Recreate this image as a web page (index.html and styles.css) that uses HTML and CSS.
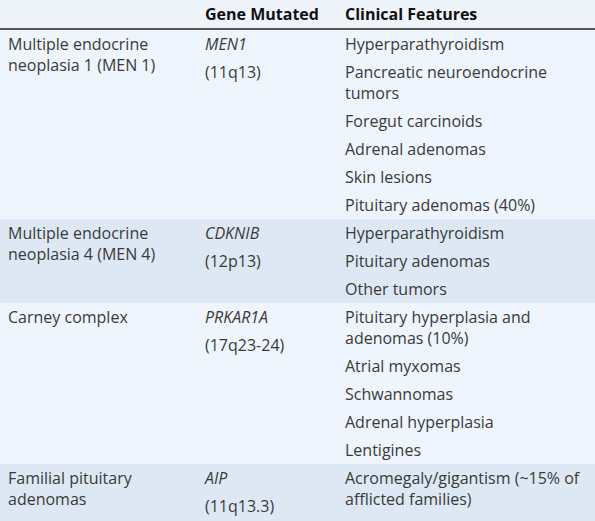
FILE: index.html
```html
<!DOCTYPE html>
<html>
<head>
<meta charset="utf-8">
<link rel="stylesheet" href="styles.css">
</head>
<body>
<table class="tbl">
  <thead>
    <tr>
      <th class="c1"></th>
      <th class="c2">Gene Mutated</th>
      <th class="c3">Clinical Features</th>
    </tr>
  </thead>
  <tbody>
    <tr class="light">
      <td class="c1"><div class="item">Multiple endocrine neoplasia 1 (MEN 1)</div></td>
      <td class="c2"><div class="item"><i>MEN1</i></div><div class="item">(11q13)</div></td>
      <td class="c3">
        <div class="item">Hyperparathyroidism</div>
        <div class="item">Pancreatic neuroendocrine tumors</div>
        <div class="item">Foregut carcinoids</div>
        <div class="item">Adrenal adenomas</div>
        <div class="item">Skin lesions</div>
        <div class="item">Pituitary adenomas (40%)</div>
      </td>
    </tr>
    <tr class="dark">
      <td class="c1"><div class="item">Multiple endocrine neoplasia 4 (MEN 4)</div></td>
      <td class="c2"><div class="item"><i>CDKNIB</i></div><div class="item">(12p13)</div></td>
      <td class="c3">
        <div class="item">Hyperparathyroidism</div>
        <div class="item">Pituitary adenomas</div>
        <div class="item">Other tumors</div>
      </td>
    </tr>
    <tr class="light">
      <td class="c1"><div class="item">Carney complex</div></td>
      <td class="c2"><div class="item"><i>PRKAR1A</i></div><div class="item">(17q23-24)</div></td>
      <td class="c3">
        <div class="item">Pituitary hyperplasia and adenomas (10%)</div>
        <div class="item">Atrial myxomas</div>
        <div class="item">Schwannomas</div>
        <div class="item">Adrenal hyperplasia</div>
        <div class="item">Lentigines</div>
      </td>
    </tr>
    <tr class="dark">
      <td class="c1"><div class="item">Familial pituitary adenomas</div></td>
      <td class="c2"><div class="item"><i>AIP</i></div><div class="item">(11q13.3)</div></td>
      <td class="c3">
        <div class="item">Acromegaly/gigantism (~15% of afflicted families)</div>
      </td>
    </tr>
  </tbody>
</table>
</body>
</html>
```
FILE: styles.css
```css
html, body {
  margin: 0;
  padding: 0;
  background: #dde8f4;
}
body {
  font-family: "Open Sans", "Noto Sans", sans-serif;
  font-size: 16px;
  color: #3a3a3a;
}
.tbl {
  width: 595px;
  border-collapse: collapse;
  table-layout: fixed;
}
.tbl th {
  background: #eef4fa;
  color: #111;
  font-weight: 700;
  text-align: left;
  height: 28px;
  padding: 0;
  vertical-align: middle;
  border-bottom: 2px solid #555;
  line-height: 20px;
}
.tbl td {
  vertical-align: top;
  padding: 4px 0 3px 0;
  line-height: 21px;
}
.c1 { width: 197px; padding-left: 8px !important; }
.c2 { width: 140px; }
.c3 { width: 250px; padding-right: 8px !important; }
.light td { background: #eef5fc; }
.dark td { background: #dde8f4; }
.item + .item { margin-top: 7px; }
.c1 .item { width: 175px; }
```
